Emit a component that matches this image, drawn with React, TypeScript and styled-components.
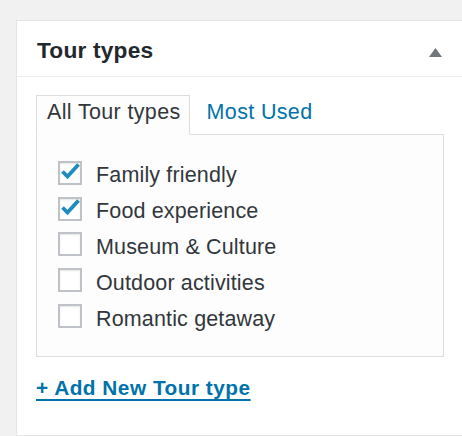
import React from "react";
import styled, { createGlobalStyle } from "styled-components";

const GlobalStyle = createGlobalStyle`
  html, body {
    margin: 0;
    padding: 0;
    background: #f1f1f1;
    overflow: hidden;
  }
  body {
    font-family: "Liberation Sans", Arial, sans-serif;
  }
`;

const Page = styled.div`
  padding: 20px 0 0 16px;
  height: 436px;
  box-sizing: border-box;
`;

const Box = styled.div`
  width: 447px;
  height: 416px;
  box-sizing: border-box;
  background: #fff;
  border: 1px solid #e5e5e5;
  box-shadow: 0 1px 1px rgba(0, 0, 0, 0.04);
`;

const Header = styled.div`
  height: 55px;
  display: flex;
  align-items: center;
  justify-content: space-between;
  border-bottom: 1px solid #eee;
  padding: 0 0 0 20px;
`;

const Title = styled.h2`
  margin: 2px 0 0;
  font-size: 22.7px;
  font-weight: 700;
  letter-spacing: 0.2px;
  color: #23282d;
  line-height: 26px;
`;

const Toggle = styled.span`
  display: flex;
  margin: 8px 20px 0 0;
`;

const Inside = styled.div`
  padding: 18px 18px 0 19px;
`;

const Tabs = styled.ul`
  display: flex;
  margin: 0;
  padding: 0;
  list-style: none;
`;

const Tab = styled.li<{ active?: boolean }>`
  position: relative;
  z-index: 1;
  margin: 0 6px -1px 0;
  padding: 4px 8px 9px 10px;
  font-size: 21.5px;
  letter-spacing: 0.35px;
  line-height: 25px;
  border: 1px solid ${({ active }) => (active ? "#ddd" : "transparent")};
  border-bottom-color: ${({ active }) => (active ? "#fdfdfd" : "transparent")};
  background: ${({ active }) => (active ? "#fdfdfd" : "transparent")};
  color: ${({ active }) => (active ? "#32373c" : "#0073aa")};
`;

const Panel = styled.div`
  border: 1px solid #ddd;
  background: #fdfdfd;
  height: 223px;
  box-sizing: border-box;
  padding: 20px 0 0 21px;
`;

const Row = styled.label`
  display: flex;
  align-items: center;
  height: 35.8px;
  gap: 14px;
  font-size: 21.5px;
  letter-spacing: 0.15px;
  color: #32373c;
`;

const Check = styled.span`
  position: relative;
  flex: none;
  width: 24px;
  height: 24px;
  box-sizing: border-box;
  border: 2px solid #bfc3c7;
  background: #fff;
  box-shadow: inset 0 1px 2px rgba(0, 0, 0, 0.1);
`;

const Mark = styled.svg`
  position: absolute;
  left: -2px;
  top: -2px;
`;

const Label = styled.span`
  padding-top: 6px;
`;

const AddLink = styled.a`
  display: inline-block;
  margin-top: 19px;
  font-size: 20.8px;
  font-weight: 700;
  letter-spacing: 0.5px;
  line-height: 24px;
  color: #0073aa;
  text-decoration: underline;
  text-decoration-thickness: 2px;
  text-underline-offset: 4px;
`;

const items = [
  { name: "Family friendly", checked: true },
  { name: "Food experience", checked: true },
  { name: "Museum & Culture", checked: false },
  { name: "Outdoor activities", checked: false },
  { name: "Romantic getaway", checked: false },
];

const Checkbox = ({ checked }: { checked: boolean }) => (
  <Check>
    {checked && (
      <Mark width="24" height="24" viewBox="0 0 24 24">
        <path d="M4.5 10.5 L9.5 15.5 L20.5 3.5" fill="none" stroke="#1e8cbe" strokeWidth="3.8" />
      </Mark>
    )}
  </Check>
);

export default function App() {
  return (
    <Page>
      <GlobalStyle />
      <Box>
        <Header>
          <Title>Tour types</Title>
          <Toggle>
            <svg width="13" height="9" viewBox="0 0 13 9">
              <path d="M6.5 0 L13 9 L0 9 Z" fill="#72777c" />
            </svg>
          </Toggle>
        </Header>
        <Inside>
          <Tabs>
            <Tab active>All Tour types</Tab>
            <Tab>Most Used</Tab>
          </Tabs>
          <Panel>
            {items.map((item) => (
              <Row key={item.name}>
                <Checkbox checked={item.checked} />
                <Label>{item.name}</Label>
              </Row>
            ))}
          </Panel>
          <AddLink href="#">+ Add New Tour type</AddLink>
        </Inside>
      </Box>
    </Page>
  );
}
